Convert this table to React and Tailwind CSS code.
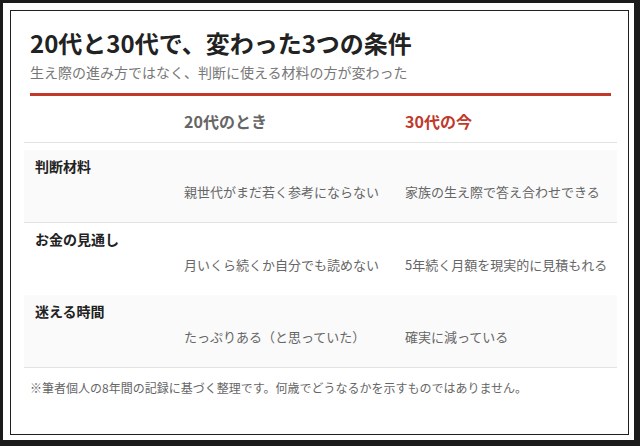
const font = { fontFamily: '"Noto Sans CJK JP", "Noto Sans", sans-serif' }

const rows = [
  { label: '判断材料', before: '親世代がまだ若く参考にならない', now: '家族の生え際で答え合わせできる', shade: true, line: true },
  { label: 'お金の見通し', before: '月いくら続くか自分でも読めない', now: '5年続く月額を現実的に見積もれる', shade: false, line: false },
  { label: '迷える時間', before: 'たっぷりある（と思っていた）', now: '確実に減っている', shade: true, line: true },
]

function Row({ label, before, now, shade, line }) {
  return (
    <div className={`${shade ? 'bg-[#fafafa]' : 'bg-white'} ${line ? 'border-b border-[#e2e2e2]' : ''} pt-[6px] pb-[20px]`}>
      <div className="pl-[11px] h-[20px] leading-[20px] text-[14px] font-bold text-[#222]">{label}</div>
      <div className="grid grid-cols-[160px_221px_1fr] mt-[6px] h-[20px] leading-[20px] text-[13px] text-[#666]">
        <div />
        <div>{before}</div>
        <div>{now}</div>
      </div>
    </div>
  )
}

export default function App() {
  return (
    <div className="w-[640px] h-[446px] bg-[#1b1b1b] pl-[3px] pt-[3px] overflow-hidden" style={font}>
      <div className="w-[631px] h-[437px] bg-white pl-[7px] pt-[7px]">
        <div className="w-[619px] h-[425px] border border-[#1f1f1f] pl-[19px] pr-[17px] pt-[16px]">
          <h1 className="text-[24px] leading-[32px] font-bold text-[#222]">20代と30代で、変わった3つの条件</h1>
          <p className="mt-[3px] text-[14px] leading-[20px] text-[#777]">生え際の進み方ではなく、判断に使える材料の方が変わった</p>
          <div className="mt-[11px] h-[3px] bg-[#c0392b]" />

          <div className="-ml-[6px] -mr-[6px]">
            <div className="grid grid-cols-[160px_221px_1fr] h-[47px] pt-[4px] items-center border-b border-[#e2e2e2] text-[16px] font-bold">
              <div />
              <div className="text-[#666]">20代のとき</div>
              <div className="text-[#c0392b]">30代の今</div>
            </div>
            <div className="h-[7px]" />
            {rows.map((r, i) => (
              <Row key={i} {...r} />
            ))}
          </div>

          <p className="mt-[10px] text-[12px] leading-[20px] text-[#666]">
            ※筆者個人の8年間の記録に基づく整理です。何歳でどうなるかを示すものではありません。
          </p>
        </div>
      </div>
    </div>
  )
}
